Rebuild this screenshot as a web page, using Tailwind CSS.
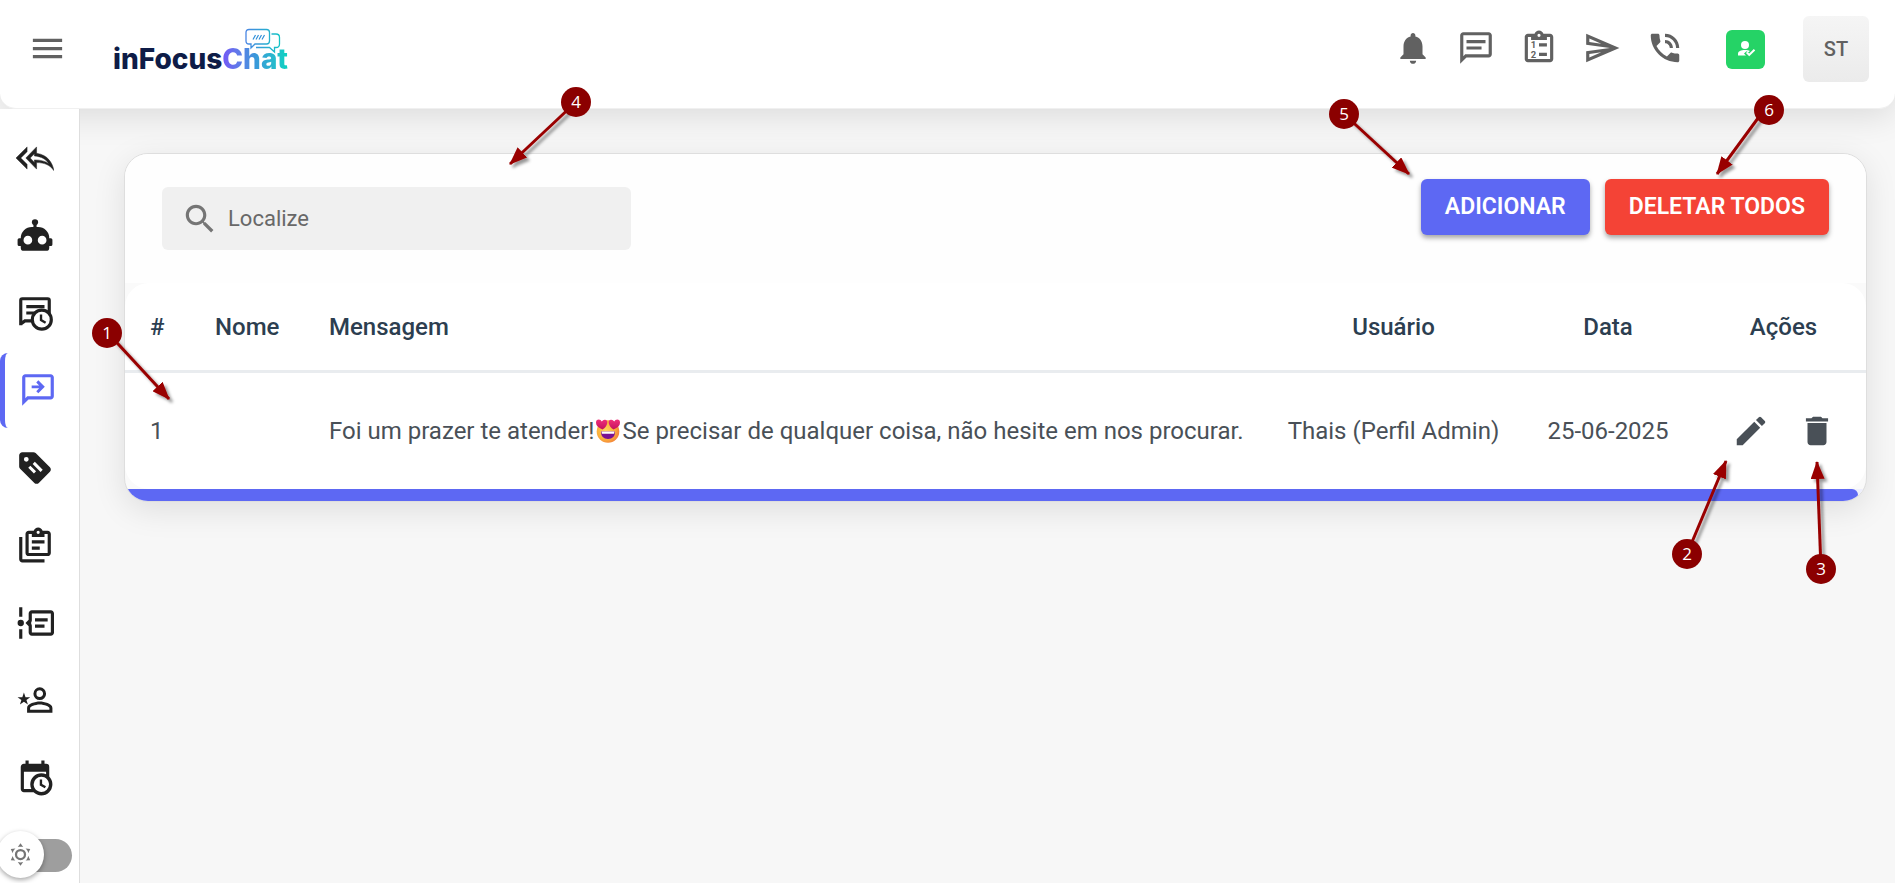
<!DOCTYPE html>
<html lang="pt-BR">
<head>
<meta charset="utf-8">
<meta name="viewport" content="width=device-width, initial-scale=1">
<title>inFocusChat</title>
<script src="https://cdn.jsdelivr.net/npm/@tailwindcss/browser@4"></script>
</head>
<body class="relative flex min-h-screen flex-col overflow-x-hidden bg-[#f7f7f7] font-['Roboto',sans-serif]">

<header class="z-10 flex h-[109px] shrink-0 items-start rounded-b-2xl border-b border-[#f0f0f0] bg-white pr-[26px] shadow-[0_8px_32px_rgba(0,0,0,0.11)]">
  <button type="button" aria-label="Menu" class="mt-[29px] ml-7 text-[#616161]">
    <svg class="size-[39px]" viewBox="0 0 24 24" fill="currentColor"><path d="M3 18h18v-2H3v2zm0-5h18v-2H3v2zm0-7v2h18V6H3z"/></svg>
  </button>
  <a href="#" aria-label="inFocusChat" class="relative mt-[41px] ml-[46px] flex font-['Inter',sans-serif] text-[28px] leading-9 font-extrabold text-[#0e1c47]">
    <span>inFocus</span><span class="bg-linear-to-r from-[#7456f6] via-[#3a97da] to-[#04d2c0] bg-clip-text text-transparent">Chat</span>
    <svg class="absolute -top-[13px] right-[7px] h-[26px] w-[36px]" viewBox="0 0 36 26" fill="none">
      <defs><linearGradient id="bubble" x1="0" x2="36" y1="0" y2="0" gradientUnits="userSpaceOnUse"><stop stop-color="#4a84e4"/><stop offset="1" stop-color="#12c6c4"/></linearGradient></defs>
      <path d="M4 1.500h17.500q3 0 3 3V13q0 3-3 3H10l-4 4v-4H4q-3 0-3-3V4.500q0-3 3-3zM26.500 6H31q3.500 0 3.500 3.500V16q0 3.500-3.500 3.500h-1.500v4.500l-5-4.500H11" stroke="url(#bubble)" stroke-width="1.300"/>
      <path d="M8 11.500l2.500-4.500M11 11.500l2.500-4.500M14 11.500l2.500-4.500M17 11.500l2.500-4.500" stroke="#2f8fd8" stroke-width="1.200"/>
    </svg>
  </a>
  <div class="mt-[29px] ml-auto flex w-[290px] justify-between text-[#616161]">
    <button type="button" aria-label="Notificações"><svg class="size-[38px]" viewBox="0 0 24 24" fill="currentColor"><path d="M12 22c1.100 0 2-.9 2-2h-4c0 1.100.89 2 2 2zm6-6v-5c0-3.070-1.640-5.640-4.500-6.320V4c0-.83-.67-1.500-1.500-1.500s-1.500.67-1.500 1.500v.68C7.630 5.360 6 7.920 6 11v5l-2 2v1h16v-1l-2-2z"/></svg></button>
    <button type="button" aria-label="Mensagens"><svg class="size-[38px]" viewBox="0 0 24 24" fill="currentColor"><path d="M4 4h16v12H5.170L4 17.170V4m0-2c-1.100 0-1.990.9-1.990 2L2 22l4-4h14c1.100 0 2-.9 2-2V4c0-1.100-.9-2-2-2H4zm2 5h12v2H6V7zm0 4h9.500v2H6z"/></svg></button>
    <button type="button" aria-label="Tarefas"><svg class="size-[38px]" viewBox="0 0 24 24" fill="currentColor"><path fill-rule="evenodd" d="M19 3h-4.180C14.400 1.840 13.300 1 12 1s-2.400.84-2.820 2H5c-1.100 0-2 .9-2 2v14c0 1.100.9 2 2 2h14c1.100 0 2-.9 2-2V5c0-1.100-.9-2-2-2zm-7 0a1 1 0 110 2 1 1 0 010-2zM5 5h2v2h10V5h2v14H5V5zm7 4v2h5V9h-5zm0 6v2h5v-2h-5z"/><text x="8.500" y="12.300" font-size="6" font-weight="700" text-anchor="middle">1</text><text x="8.500" y="18" font-size="6" font-weight="700" text-anchor="middle">2</text></svg></button>
    <button type="button" aria-label="Enviar"><svg class="size-[38px]" viewBox="0 0 24 24" fill="currentColor"><path d="M4.010 6.030l7.510 3.220-7.520-1 .01-2.220m7.500 8.720L4 17.970v-2.220l7.510-1M2.010 3L2 10l15 2-15 2 .01 7L23 12 2.010 3z"/></svg></button>
    <button type="button" aria-label="Chamadas"><svg class="size-[38px]" viewBox="0 0 24 24" fill="currentColor"><path d="M20 15.500c-1.250 0-2.450-.2-3.570-.57-.35-.11-.74-.03-1.020.24l-2.200 2.200c-2.830-1.440-5.150-3.750-6.590-6.590l2.200-2.210c.28-.26.36-.65.25-1C8.700 6.450 8.500 5.250 8.500 4c0-.55-.45-1-1-1H4c-.55 0-1 .45-1 1 0 9.390 7.610 17 17 17 .55 0 1-.45 1-1v-3.500c0-.55-.45-1-1-1zM19 12h2c0-4.970-4.030-9-9-9v2c3.870 0 7 3.130 7 7zm-4 0h2c0-2.760-2.240-5-5-5v2c1.660 0 3 1.340 3 3z"/></svg></button>
  </div>
  <button type="button" aria-label="Usuário ativo" class="mt-[30px] ml-[42px] flex size-[39px] items-center justify-center rounded-md bg-[#25d366] text-white">
    <svg class="size-5" viewBox="0 0 20 20" fill="currentColor"><circle cx="9" cy="5" r="4"/><path d="M2 15.500V14c0-3 3-4 7-4 2 0 3.700.3 4.900.9L12.300 12.500l-1.800-1.300L8 13.500l2 2z"/><path d="M10.600 12.400l2.600 2.500 5.300-5.200" fill="none" stroke="currentColor" stroke-width="2"/></svg>
  </button>
  <button type="button" class="mt-4 ml-[38px] size-[66px] rounded-md bg-linear-to-b from-[#f5f5f5] to-[#ebebeb] text-[20px] font-medium text-[#616161]">ST</button>
</header>

<div class="flex flex-1">
  <aside class="z-20 flex w-20 shrink-0 flex-col border-r border-[#dedede] bg-white pt-[11px] text-[#212121]">
    <nav class="flex flex-1 flex-col justify-between" aria-label="Principal">
      <a href="#" aria-label="Respostas" class="flex h-[75px] w-[70px] items-center justify-center"><svg class="size-[38px]" viewBox="0 0 24 24" fill="currentColor"><path fill-rule="evenodd" d="M13 9V5l-6.800 7 6.800 7v-4.100c5 0 8.500 1.600 11 5.100-1-5-4-10-11-11zM11.600 9.300v1.400c4.700.4 7.400 2.200 9.100 4.900-2.300-1.700-5.200-2.400-9.100-2.400v1.600L9 12zM7 8V5l-7 7 7 7v-3l-4-4 4-4z" stroke="currentColor" stroke-width=".3"/></svg></a>
      <a href="#" aria-label="Robô" class="flex h-[75px] w-[70px] items-center justify-center"><svg class="size-[38px]" viewBox="0 0 24 24" fill="currentColor"><path d="M12,2A2,2 0 0,1 14,4C14,4.740 13.600,5.390 13,5.730V7H14A7,7 0 0,1 21,14H22A1,1 0 0,1 23,15V18A1,1 0 0,1 22,19H21V20A2,2 0 0,1 19,22H5A2,2 0 0,1 3,20V19H2A1,1 0 0,1 1,18V15A1,1 0 0,1 2,14H3A7,7 0 0,1 10,7H11V5.730C10.400,5.390 10,4.740 10,4A2,2 0 0,1 12,2M7.500,12.500A2.700,2.700 0 0,0 7.500,18A2.700,2.700 0 0,0 7.500,12.500M16.500,12.500A2.700,2.700 0 0,0 16.500,18A2.700,2.700 0 0,0 16.500,12.500Z"/></svg></a>
      <a href="#" aria-label="Mensagens agendadas" class="flex h-[75px] w-[70px] items-center justify-center"><svg class="size-[38px]" viewBox="0 0 24 24" fill="none" stroke="currentColor" stroke-width="2"><path d="M3 19.800V4q0-1 1-1h16q1 0 1 1v9M3 19l2.600-2H10M6.500 8h11.500M6.500 12h6"/><circle cx="16.300" cy="16.200" r="6" fill="#fff"/><path d="M15.800 13v3.500l2.900 1.700" stroke-width="1.500"/></svg></a>
      <a href="#" aria-label="Mensagens rápidas" aria-current="page" class="flex h-[75px] w-[70px] items-center justify-center rounded-l-lg border-l-[5px] border-[#5d68f3] text-[#5d68f3]"><svg class="size-[38px]" viewBox="0 0 24 24" fill="currentColor"><path d="M20 2H4c-1.100 0-2 .9-2 2v18l4-4h14c1.100 0 2-.9 2-2V4c0-1.100-.9-2-2-2zm0 14H5.200L4 17.200V4h16v12zM12.200 5.900L16.300 10l-4.100 4.100-1.300-1.300 1.800-1.900H8V9.100h4.700l-1.800-1.900z"/></svg></a>
      <a href="#" aria-label="Etiquetas" class="flex h-[75px] w-[70px] items-center justify-center"><svg class="size-[38px]" viewBox="0 0 24 24" fill="currentColor"><path d="M21.410 11.580l-9-9C12.050 2.220 11.550 2 11 2H4c-1.100 0-2 .9-2 2v7c0 .55.22 1.050.59 1.420l9 9c.36.36.86.58 1.410.58.55 0 1.050-.22 1.410-.59l7-7c.37-.36.59-.86.59-1.410 0-.55-.23-1.060-.59-1.420zM6.500 8a1.500 1.500 0 110-3 1.500 1.500 0 010 3z"/><path d="M8.400 11.200l3.600 3.600M11.200 8.800l5 5" stroke="#fff" stroke-width="1.900"/></svg></a>
      <a href="#" aria-label="Tarefas" class="flex h-[75px] w-[70px] items-center justify-center"><svg class="size-[38px]" viewBox="0 0 24 24" fill="currentColor"><path fill-rule="evenodd" d="M4 7v14h14v2H4c-1.100 0-2-.9-2-2V7h2zM20 3h-3.180C16.400 1.840 15.300 1 14 1s-2.400.84-2.820 2H8c-1.100 0-2 .9-2 2v12c0 1.100.9 2 2 2h12c1.100 0 2-.9 2-2V5c0-1.100-.9-2-2-2zm-6 0a1 1 0 110 2 1 1 0 010-2zM8 5h2v2h8V5h2v12H8V5zm2 4v2h8V9h-8zm0 4v2h5v-2h-5z"/></svg></a>
      <a href="#" aria-label="Fluxos" class="flex h-[75px] w-[70px] items-center justify-center"><svg class="size-[38px]" viewBox="0 0 24 24" fill="currentColor"><path fill-rule="evenodd" d="M2 2h2v6H2zM2 16h2v6H2zM3 10a2 2 0 110 4 2 2 0 010-4zM10 4h12c1.100 0 2 .9 2 2v12c0 1.100-.9 2-2 2H10c-1.100 0-2-.9-2-2v-4l-2-2 2-2V6c0-1.100.9-2 2-2zm0 2v4.500L9.500 12l.5 1.500V18h12V6zM12 9h8v2h-8zM12 13h6v2h-6z"/></svg></a>
      <a href="#" aria-label="Contatos" class="flex h-[75px] w-[70px] items-center justify-center"><svg class="size-[38px]" viewBox="0 0 24 24" fill="currentColor"><path d="M15,4A4,4 0 0,0 11,8A4,4 0 0,0 15,12A4,4 0 0,0 19,8A4,4 0 0,0 15,4M15,5.900C16.160,5.900 17.100,6.840 17.100,8C17.100,9.160 16.160,10.100 15,10.100A2.100,2.100 0 0,1 12.900,8A2.100,2.100 0 0,1 15,5.900M15,13C12.330,13 7,14.330 7,17V20H23V17C23,14.330 17.670,13 15,13M15,14.900C17.970,14.900 21.100,16.360 21.100,17V18.100H8.900V17C8.900,16.360 12,14.900 15,14.900M5,7.300L6,10.200H9L6.600,12L7.500,14.900L5,13.100L2.500,14.900L3.400,12L1,10.200H4Z"/></svg></a>
      <a href="#" aria-label="Agendamentos" class="flex h-[75px] w-[70px] items-center justify-center"><svg class="size-[38px]" viewBox="0 0 24 24" fill="currentColor"><path d="M15,13H16.500V15.820L18.940,17.230L18.190,18.530L15,16.690V13M19,8H5V19H9.670C9.240,18.090 9,17.070 9,16A7,7 0 0,1 16,9C17.070,9 18.090,9.240 19,9.670V8M5,21C3.890,21 3,20.100 3,19V5C3,3.890 3.890,3 5,3H6V1H8V3H16V1H18V3H19A2,2 0 0,1 21,5V11.100C22.240,12.360 23,14.090 23,16A7,7 0 0,1 16,23C14.090,23 12.360,22.240 11.100,21H5M16,11.150A4.850,4.850 0 0,0 11.150,16C11.150,18.680 13.320,20.850 16,20.850A4.850,4.850 0 0,0 20.850,16C20.850,13.320 18.680,11.150 16,11.150Z"/></svg></a>
    </nav>
    <label class="relative mt-4 mb-1 flex h-12 w-[72px] items-center">
      <input type="checkbox" role="switch" aria-label="Tema escuro" class="ml-5 h-[33px] flex-1 appearance-none rounded-r-full bg-[#9e9e9e]">
      <span class="absolute top-0 -left-[3px] flex size-[47px] items-center justify-center rounded-full bg-white text-[#757575] shadow-[0_2px_5px_rgba(0,0,0,0.35)]">
        <svg class="size-[27px]" viewBox="0 0 24 24" fill="currentColor"><path d="M12,7A5,5 0 0,1 17,12A5,5 0 0,1 12,17A5,5 0 0,1 7,12A5,5 0 0,1 12,7M12,9A3,3 0 0,0 9,12A3,3 0 0,0 12,15A3,3 0 0,0 15,12A3,3 0 0,0 12,9M12,2L14.390,5.420C13.650,5.150 12.840,5 12,5C11.160,5 10.350,5.150 9.610,5.420L12,2M3.340,7L7.500,6.650C6.900,7.160 6.360,7.780 5.940,8.500C5.500,9.240 5.250,10 5.110,10.790L3.340,7M3.360,17L5.120,13.230C5.260,14 5.530,14.780 5.950,15.500C6.370,16.240 6.910,16.860 7.500,17.370L3.360,17M20.650,7L18.880,10.790C18.740,10 18.470,9.230 18.050,8.500C17.630,7.780 17.100,7.150 16.500,6.640L20.650,7M20.640,17L16.500,17.360C17.090,16.850 17.620,16.220 18.040,15.500C18.460,14.770 18.730,14 18.870,13.210L20.640,17M12,22L9.590,18.560C10.330,18.830 11.140,19 12,19C12.820,19 13.630,18.830 14.370,18.560L12,22Z"/></svg>
      </span>
    </label>
  </aside>

  <main class="min-w-0 flex-1 pt-11 pr-7 pl-11">
    <section class="overflow-hidden rounded-3xl border border-[#dedede] bg-[#fafafa] shadow-[0_8px_32px_rgba(0,0,0,0.1)]">
      <div class="flex items-start justify-between bg-[#fefefe] pt-[25px] pr-[37px] pb-[33px] pl-[37px]">
        <label class="mt-2 flex h-[63px] w-[469px] items-center gap-[9px] rounded-md bg-[#f0f0f0] pl-[19px] text-[#757575]">
          <svg class="size-[38px] shrink-0" viewBox="0 0 24 24" fill="currentColor"><path d="M15.500 14h-.79l-.28-.27C15.410 12.590 16 11.110 16 9.500 16 5.910 13.090 3 9.500 3S3 5.910 3 9.500 5.910 16 9.500 16c1.610 0 3.090-.59 4.230-1.570l.27.28v.79l5 4.990L20.490 19l-4.990-5zm-6 0C7.010 14 5 11.990 5 9.500S7.010 5 9.500 5 14 7.010 14 9.500 11.990 14 9.500 14z"/></svg>
          <input type="search" placeholder="Localize" aria-label="Localize" class="min-w-0 flex-1 bg-transparent text-[22px] leading-8 text-[#444] outline-none placeholder:text-[#686868]">
        </label>
        <div class="flex gap-[15px] text-[23px] font-semibold text-white">
          <button type="button" class="h-14 rounded-md bg-[#5d68f3] px-6 shadow-[0_3px_5px_rgba(0,0,0,0.35)]">ADICIONAR</button>
          <button type="button" class="h-14 rounded-md bg-[#f44336] px-6 shadow-[0_3px_5px_rgba(0,0,0,0.35)]">DELETAR TODOS</button>
        </div>
      </div>
      <div class="overflow-hidden rounded-3xl bg-white">
        <table class="w-full table-fixed border-separate border-spacing-0 text-2xl whitespace-nowrap text-[#495057]">
          <colgroup><col class="w-[65px]"><col class="w-[114px]"><col><col class="w-[259px]"><col class="w-[170px]"><col class="w-[173px]"></colgroup>
          <thead>
            <tr class="h-[90px] text-[#2c3e50]">
              <th scope="col" class="border-b-[3px] border-[#e9ecef] pl-[25px] text-left font-medium">#</th>
              <th scope="col" class="border-b-[3px] border-[#e9ecef] pl-[25px] text-left font-medium">Nome</th>
              <th scope="col" class="border-b-[3px] border-[#e9ecef] pl-[25px] text-left font-medium">Mensagem</th>
              <th scope="col" class="border-b-[3px] border-[#e9ecef] text-center font-medium">Usuário</th>
              <th scope="col" class="border-b-[3px] border-[#e9ecef] text-center font-medium">Data</th>
              <th scope="col" class="border-b-[3px] border-[#e9ecef] pl-2 text-center font-medium">Ações</th>
            </tr>
          </thead>
          <tbody>
            <tr class="h-[116px]">
              <td class="pl-[25px]">1</td>
              <td></td>
              <td class="pl-[25px]">Foi um prazer te atender!<svg role="img" aria-label="apaixonado" class="mx-[2px] inline size-6 align-[-4px]" viewBox="0 0 24 24">
                <defs>
                  <radialGradient id="face" cx=".4" cy=".45" r=".65"><stop stop-color="#ffd45c"/><stop offset=".6" stop-color="#fbb03c"/><stop offset="1" stop-color="#f27a3a"/></radialGradient>
                  <linearGradient id="heart" x1="0" y1="0" x2="0" y2="1"><stop stop-color="#f0307a"/><stop offset="1" stop-color="#c4105e"/></linearGradient>
                </defs>
                <circle cx="12" cy="12.500" r="11.300" fill="url(#face)"/>
                <path d="M5 12.500h14q0 7.500-7 7.500t-7-7.500z" fill="#7a1092"/><path d="M5.500 12.500h13l-.5 2.300H6z" fill="#fff"/>
                <path d="M6.500 10.500Q0 8 0 3.800 0 .5 2.800.5 4.800.5 5.800 2.500 7 .6 9 .8q2.700.4 2.200 3.400Q10.500 8 6.500 10.500z" fill="url(#heart)"/>
                <path d="M17.500 10.500Q24 8 24 3.800 24 .5 21.200.5q-2 0-3 2Q17 .6 15 .8q-2.700.4-2.200 3.400.7 3.800 4.700 6.300z" fill="url(#heart)"/>
              </svg>Se precisar de qualquer coisa, não hesite em nos procurar.</td>
              <td class="text-center">Thais (Perfil Admin)</td>
              <td class="text-center">25-06-2025</td>
              <td class="pl-2">
                <div class="flex justify-center gap-7">
                  <button type="button" aria-label="Editar"><svg class="size-[38px]" viewBox="0 0 24 24" fill="currentColor"><path d="M3 17.250V21h3.750L17.810 9.940l-3.750-3.750L3 17.250zM20.710 7.040c.39-.39.39-1.020 0-1.410l-2.340-2.340a.9959.9959 0 00-1.410 0l-1.830 1.830 3.750 3.750 1.830-1.830z"/></svg></button>
                  <button type="button" aria-label="Excluir"><svg class="size-[38px]" viewBox="0 0 24 24" fill="currentColor"><path d="M6 19c0 1.100.9 2 2 2h8c1.100 0 2-.9 2-2V7H6v12zM19 4h-3.500l-1-1h-5l-1 1H5v2h14V4z"/></svg></button>
                </div>
              </td>
            </tr>
          </tbody>
        </table>
      </div>
      <div class="bg-[#eeeffc] pr-2"><div class="h-3 rounded-r-full bg-[#5d68f3]"></div></div>
    </section>
  </main>
</div>

<!-- Numbered callouts laid over the screen -->
<svg class="pointer-events-none absolute top-0 left-0 z-30 h-[883px] w-[1895px]" viewBox="0 0 1895 883" fill="none">
  <defs>
    <marker id="tip" markerUnits="userSpaceOnUse" markerWidth="18" markerHeight="14" refX="17" refY="7" orient="auto"><path d="M0 0l18 7-18 7z" fill="#900"/></marker>
    <filter id="shade" x="-20%" y="-20%" width="150%" height="150%"><feDropShadow dx="3" dy="3" stdDeviation="1.500" flood-color="#000" flood-opacity=".4"/></filter>
  </defs>
  <g stroke="#900" stroke-width="3" filter="url(#shade)">
    <path d="M107 332L169 399" marker-end="url(#tip)"/>
    <path d="M1687 554L1726 461" marker-end="url(#tip)"/>
    <path d="M1821 569L1817 462" marker-end="url(#tip)"/>
    <path d="M576 102L510 164" marker-end="url(#tip)"/>
    <path d="M1344 114L1409 174" marker-end="url(#tip)"/>
    <path d="M1764 110L1717 174" marker-end="url(#tip)"/>
  </g>
  <g fill="#8b0000">
    <circle cx="107" cy="333" r="15"/><circle cx="1687" cy="554" r="15"/><circle cx="1821" cy="569" r="15"/>
    <circle cx="576" cy="102" r="15"/><circle cx="1344" cy="114" r="15"/><circle cx="1769" cy="110" r="15"/>
  </g>
  <g class="font-['Open_Sans',sans-serif] text-[17px]" fill="#fff" text-anchor="middle">
    <text x="107" y="339">1</text><text x="1687" y="560">2</text><text x="1821" y="575">3</text>
    <text x="576" y="108">4</text><text x="1344" y="120">5</text><text x="1769" y="116">6</text>
  </g>
</svg>
</body>
</html>
